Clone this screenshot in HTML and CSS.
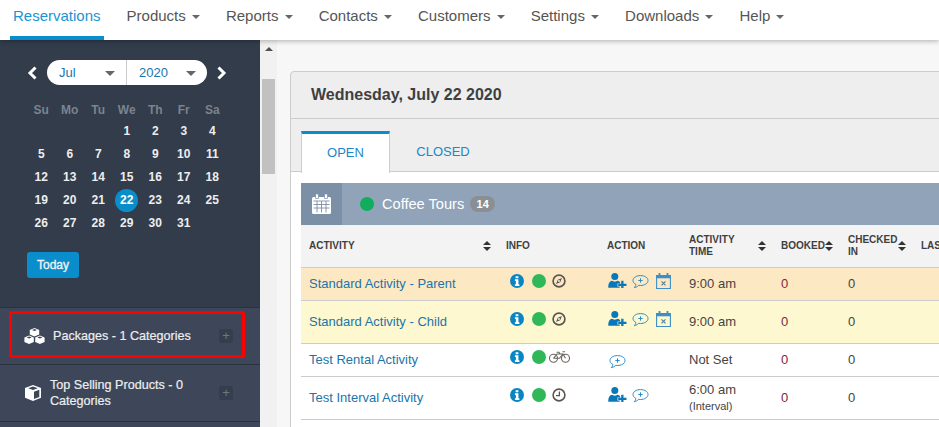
FILE: index.html
```html
<!DOCTYPE html>
<html lang="en">
<head>
<meta charset="utf-8">
<title>Reservations</title>
<link rel="stylesheet" href="styles.css">
</head>
<body>
<svg class="defs" width="0" height="0" aria-hidden="true">
  <symbol id="i-info" viewBox="0 0 14 14">
    <circle cx="7" cy="7" r="7" fill="#0a85c4"/>
    <path d="M5.600 2.200h2.800v2.100H5.600zM4.900 5.300h3.500v4.900h1v1.700H4.900v-1.700h1V7H4.900z" fill="#fff"/>
  </symbol>
  <symbol id="i-compass" viewBox="0 0 14 14">
    <circle cx="7" cy="7" r="5.900" fill="none" stroke="#5d5650" stroke-width="1.700"/>
    <path d="M10 4 8.200 8.200 4 10l1.800-4.200z" fill="#5d5650"/>
    <circle cx="7" cy="7" r=".9" fill="#fff"/>
  </symbol>
  <symbol id="i-clock" viewBox="0 0 14 14">
    <circle cx="7" cy="7" r="5.900" fill="none" stroke="#5d5650" stroke-width="1.600"/>
    <path d="M7.400 3.400v4.200H4" fill="none" stroke="#5d5650" stroke-width="1.300"/>
  </symbol>
  <symbol id="i-bike" viewBox="0 0 21 12">
    <g fill="none" stroke="#6b6560" stroke-width="1.100">
      <circle cx="4.500" cy="7.300" r="4"/>
      <circle cx="16.500" cy="7.300" r="4"/>
      <path d="M4.500 7.300 8 3h6l2.500 4.300M14 3l-3.500 4.300h-6M7.500 1.300H10l1 1.700M13.500.7H16"/>
    </g>
  </symbol>
  <symbol id="i-user" viewBox="0 0 19 15">
    <circle cx="6.800" cy="3.600" r="3.500" fill="#0a78b8"/>
    <path d="M.3 14.800c-.4-4.300 1.500-6.800 3.500-7 1.800 1.100 4.200 1.100 6 0 .9.100 1.700.6 2.300 1.400v1.300H9.500v3h2.200v1.300z" fill="#0a78b8"/>
    <path d="M13.200 7.800h2.300v3h3v2.300h-3v1.900h-2.300V13.100h-3v-2.300h3z" fill="#0a78b8"/>
  </symbol>
  <symbol id="i-chat" viewBox="0 0 17 14">
    <path d="M8.500.6C4.300.6 1 2.700 1 5.500c0 1.600 1.100 3 2.800 3.800 0 1.300-.6 2.400-1.500 3.400 1.800-.3 3.300-1.200 4.400-2.400.6.100 1.200.2 1.800.2 4.200 0 7.500-2.100 7.500-5S12.700.6 8.500.6z" fill="none" stroke="#2a8fc9" stroke-width="1"/>
    <path d="M8.500 3.300v4.400M6.300 5.500h4.400" stroke="#2a8fc9" stroke-width="1"/>
  </symbol>
  <symbol id="i-cal-x" viewBox="0 0 15 16">
    <path d="M.6 2.500h13.800v13H.6z" fill="none" stroke="#3d8fc6" stroke-width="1.100"/>
    <path d="M.6 2.500h13.800v2.800H.6z" fill="#3d8fc6"/>
    <path d="M3.500 0v3.500M11.500 0v3.500" stroke="#3d8fc6" stroke-width="1.800"/>
    <path d="m5.500 8.300 4 4M9.500 8.300l-4 4" stroke="#5a7f9c" stroke-width="1.200"/>
  </symbol>
</svg>

<header class="topbar">
  <nav class="nav">
    <a class="nav-item active">Reservations</a>
    <a class="nav-item">Products <i class="caret"></i></a>
    <a class="nav-item">Reports <i class="caret"></i></a>
    <a class="nav-item">Contacts <i class="caret"></i></a>
    <a class="nav-item">Customers <i class="caret"></i></a>
    <a class="nav-item">Settings <i class="caret"></i></a>
    <a class="nav-item">Downloads <i class="caret"></i></a>
    <a class="nav-item">Help <i class="caret"></i></a>
  </nav>
</header>

<div class="main">
  <aside class="sidebar">
    <div class="calendar">
      <div class="cal-head">
        <svg class="chev" viewBox="0 0 10 14"><path d="M8.500 1.500 3 7l5.500 5.500" fill="none" stroke="#fff" stroke-width="3"/></svg>
        <div class="pill">
          <div class="pill-part month">Jul<i class="pill-caret"></i></div>
          <div class="pill-part year">2020<i class="pill-caret"></i></div>
        </div>
        <svg class="chev" viewBox="0 0 10 14"><path d="M1.500 1.500 7 7l-5.500 5.500" fill="none" stroke="#fff" stroke-width="3"/></svg>
      </div>
      <div class="cal-grid dow">
        <span>Su</span><span>Mo</span><span>Tu</span><span>We</span><span>Th</span><span>Fr</span><span>Sa</span>
      </div>
      <div class="cal-grid days">
        <span></span><span></span><span></span><span>1</span><span>2</span><span>3</span><span>4</span>
        <span>5</span><span>6</span><span>7</span><span>8</span><span>9</span><span>10</span><span>11</span>
        <span>12</span><span>13</span><span>14</span><span>15</span><span>16</span><span>17</span><span>18</span>
        <span>19</span><span>20</span><span>21</span><span class="today"><b>22</b></span><span>23</span><span>24</span><span>25</span>
        <span>26</span><span>27</span><span>28</span><span>29</span><span>30</span><span>31</span><span></span>
      </div>
      <button class="today-btn">Today</button>
    </div>

    <div class="side-item highlighted">
      <svg class="side-icon cubes" viewBox="0 0 21 16">
        <path d="M10.500 0 15.200 2v4.400L10.500 8.400 5.800 6.400V2z" fill="#fff"/>
        <path d="M5.100 7.400 9.800 9.400v4.500L5.100 16 .4 13.900V9.400z" fill="#fff"/>
        <path d="M15.900 7.400l4.700 2v4.500L15.900 16l-4.700-2.100V9.400z" fill="#fff"/>
        <path d="M8 2.100l2.500-1 2.500 1-2.500 1zM2.600 9.500l2.500-1 2.500 1-2.500 1zM13.400 9.500l2.500-1 2.500 1-2.500 1z" fill="#3e4759"/>
      </svg>
      <span class="side-label single">Packages - 1 Categories</span>
      <span class="side-plus">+</span>
    </div>
    <div class="side-item">
      <svg class="side-icon cube" viewBox="0 0 16 16">
        <path d="M8 0 16 3v9.800L8 16 0 12.800V3z" fill="#fff"/>
        <path d="M3.200 3.200 8 1.500l4.800 1.700L8 5zM9 6.700l5.300-2v7.300L9 14.100z" fill="#3e4759"/>
      </svg>
      <span class="side-label">Top Selling Products - 0 Categories</span>
      <span class="side-plus">+</span>
    </div>
    <div class="side-item"></div>
  </aside>

  <div class="scrollbar">
    <i class="scroll-up"></i>
    <div class="scroll-thumb"></div>
  </div>

  <section class="content">
    <div class="panel">
      <h1 class="panel-title">Wednesday, July 22 2020</h1>
      <div class="tabs">
        <a class="tab active">OPEN</a>
        <a class="tab">CLOSED</a>
      </div>
      <div class="panel-body">
        <div class="group-bar">
          <div class="group-icon">
            <svg viewBox="0 0 19 20" width="19" height="20">
              <path d="M1.500 3h16A1.500 1.500 0 0 1 19 4.500v14a1.500 1.500 0 0 1-1.500 1.500h-16A1.500 1.500 0 0 1 0 18.500v-14A1.500 1.500 0 0 1 1.500 3z" fill="#fff"/>
              <path d="M3.500 0h3v4.500h-3zM12.500 0h3v4.500h-3z" fill="#fff" stroke="#7b8fa7" stroke-width=".7"/>
              <path d="M1.500 7h16M1.500 10.500h16M1.500 14h16M5 7v11.500M9.500 7v11.500M14 7v11.500" stroke="#7b8fa7" stroke-width=".9"/>
            </svg>
          </div>
          <i class="group-dot"></i>
          <span class="group-name">Coffee Tours</span>
          <span class="group-count">14</span>
        </div>
        <table class="activities">
          <colgroup>
            <col class="c-activity"><col class="c-info"><col class="c-action"><col class="c-time"><col class="c-booked"><col class="c-checked"><col class="c-last">
          </colgroup>
          <thead>
            <tr>
              <th><div class="th-inner">ACTIVITY<i class="sort"></i></div></th>
              <th>INFO</th>
              <th>ACTION</th>
              <th><div class="th-inner">ACTIVITY<br>TIME<i class="sort"></i></div></th>
              <th><div class="th-inner">BOOKED<i class="sort"></i></div></th>
              <th><div class="th-inner">CHECKED<br>IN<i class="sort"></i></div></th>
              <th>LAST</th>
            </tr>
          </thead>
          <tbody>
            <tr class="row-orange r1">
              <td><a>Standard Activity - Parent</a></td>
              <td><div class="icons info-icons"><svg class="ic"><use href="#i-info"/></svg><i class="dot"></i><svg class="ic"><use href="#i-compass"/></svg></div></td>
              <td><div class="icons act-icons"><svg class="ic-user"><use href="#i-user"/></svg><svg class="ic-chat"><use href="#i-chat"/></svg><svg class="ic-cal"><use href="#i-cal-x"/></svg></div></td>
              <td>9:00 am</td><td class="booked">0</td><td>0</td><td></td>
            </tr>
            <tr class="row-yellow r2">
              <td><a>Standard Activity - Child</a></td>
              <td><div class="icons info-icons"><svg class="ic"><use href="#i-info"/></svg><i class="dot"></i><svg class="ic"><use href="#i-compass"/></svg></div></td>
              <td><div class="icons act-icons"><svg class="ic-user"><use href="#i-user"/></svg><svg class="ic-chat"><use href="#i-chat"/></svg><svg class="ic-cal"><use href="#i-cal-x"/></svg></div></td>
              <td>9:00 am</td><td class="booked">0</td><td>0</td><td></td>
            </tr>
            <tr class="r3">
              <td><a>Test Rental Activity</a></td>
              <td><div class="icons info-icons"><svg class="ic"><use href="#i-info"/></svg><i class="dot"></i><svg class="ic-bike"><use href="#i-bike"/></svg></div></td>
              <td><div class="icons act-icons"><svg class="ic-chat"><use href="#i-chat"/></svg></div></td>
              <td>Not Set</td><td class="booked">0</td><td>0</td><td></td>
            </tr>
            <tr class="r4">
              <td><a>Test Interval Activity</a></td>
              <td><div class="icons info-icons"><svg class="ic"><use href="#i-info"/></svg><i class="dot"></i><svg class="ic"><use href="#i-clock"/></svg></div></td>
              <td><div class="icons act-icons"><svg class="ic-user"><use href="#i-user"/></svg><svg class="ic-chat"><use href="#i-chat"/></svg></div></td>
              <td>6:00 am<small>(Interval)</small></td><td class="booked">0</td><td>0</td><td></td>
            </tr>
          </tbody>
        </table>
      </div>
    </div>
  </section>
</div>
</body>
</html>
```

FILE: styles.css
```css
* { box-sizing: border-box; }
html, body { margin: 0; height: 100%; overflow: hidden; }
body { width: 939px; height: 427px; font-family: "Liberation Sans", Arial, sans-serif; background: #f7f7f7; color: #444; display: flex; flex-direction: column; }
.defs { position: absolute; }

.topbar { height: 40px; background: #fff; box-shadow: 0 1px 5px rgba(0,0,0,.3); position: relative; z-index: 2; flex: none; }
.nav { display: flex; gap: 20px; padding-left: 10px; height: 40px; }
.nav-item { padding: 0 3px; height: 40px; line-height: 32px; font-size: 15px; color: #555; white-space: nowrap; }
.nav-item.active { color: #1a94d2; border-bottom: 4px solid #0a8ecb; }
.caret { display: inline-block; width: 0; height: 0; margin-left: 2px; vertical-align: 2px; border-left: 4px solid transparent; border-right: 4px solid transparent; border-top: 4px solid #666; }

.main { flex: 1; display: flex; min-height: 0; }

.sidebar { width: 260px; flex: none; background: #323c4b; overflow: hidden; }
.calendar { height: 267px; padding-top: 20px; }
.cal-head { display: flex; align-items: center; height: 25px; padding-left: 27px; }
.chev { width: 10px; height: 14px; }
.pill { width: 160px; height: 25px; margin: 0 10px; background: #fff; border-radius: 13px; display: flex; font-size: 13px; color: #1a75ab; }
.pill-part { position: relative; line-height: 25px; }
.month { width: 80px; padding-left: 12px; border-right: 1px solid #ccc; }
.year { flex: 1; padding-left: 12px; }
.pill-caret { position: absolute; top: 11px; width: 0; height: 0; border-left: 5px solid transparent; border-right: 5px solid transparent; border-top: 5px solid #666; }
.month .pill-caret { left: 58px; }
.year .pill-caret { left: 59px; }

.cal-grid { display: grid; grid-template-columns: repeat(7, 28.5px); padding-left: 27px; font-weight: 700; font-size: 12px; text-align: center; }
.dow { margin-top: 18px; height: 14px; line-height: 14px; color: #7b838f; }
.days { margin-top: 2.600px; grid-auto-rows: 23.100px; line-height: 23px; color: #eee; }
.today b { display: block; width: 23px; height: 23px; margin: 0 auto; border-radius: 50%; background: #0a8ecb; color: #fff; }
.today-btn { display: block; margin: 17.400px 0 0 27px; width: 52px; height: 26px; padding: 0; border: 0; border-radius: 3px; background: #0a8ecb; color: #f2f2f2; font-family: "Liberation Sans", Arial, sans-serif; font-size: 12px; -webkit-text-stroke: .35px #f2f2f2; }

.side-item { position: relative; height: 57px; background: #3e4759; border-top: 1px solid #2a3240; display: flex; align-items: center; color: #eceef0; font-size: 12.600px; line-height: 16px; -webkit-text-stroke: .2px #eceef0; }
.highlighted::after { content: ""; box-sizing: border-box; position: absolute; left: 9px; top: 3px; width: 236px; height: 47px; border: 3px solid #f00; border-radius: 2px; }
.side-icon { flex: none; }
.cubes { width: 21px; height: 16px; margin-left: 24px; }
.cube { width: 16px; height: 16px; margin-left: 25px; }
.side-label { flex: none; width: 150px; margin-left: 8px; }
.side-label.single { white-space: nowrap; }
.cube + .side-label { margin-left: 9px; }
.side-plus { position: absolute; left: 219px; top: 21px; width: 14px; height: 14px; background: #353e4e; border-radius: 2px; color: #6f7785; font-size: 13px; line-height: 14px; text-align: center; -webkit-text-stroke: 0; }

.scrollbar { width: 17px; flex: none; background: #f1f1f1; display: flex; flex-direction: column; align-items: center; }
.scroll-up { margin-top: 7px; width: 0; height: 0; border-left: 4px solid transparent; border-right: 4px solid transparent; border-bottom: 4px solid #505050; flex: none; }
.scroll-thumb { margin-top: 28px; width: 13px; height: 95px; background: #c1c1c1; }

.content { flex: 1; min-width: 0; padding: 31px 0 0 13px; overflow: hidden; }
.panel { width: 700px; height: 400px; background: #eee; border: 1px solid #ccc; border-radius: 4px 0 0 0; }
.panel-title { margin: 0; height: 47px; padding-left: 20px; line-height: 45px; font-size: 16px; font-weight: 700; color: #3f3f3f; border-bottom: 1px solid #ccc; }
.tabs { display: flex; height: 53px; padding: 12px 0 0 10px; background: #eee; }
.tab { height: 41px; font-size: 13px; line-height: 43px; text-align: center; color: #1a88c9; }
.tab.active { position: relative; z-index: 1; width: 89px; height: 42px; background: #fff; border: 1px solid #ccc; border-top: 3px solid #0a8ecb; border-bottom: 0; line-height: 37px; }
.tab:not(.active) { width: 106px; line-height: 42px; }
.panel-body { position: relative; background: #fff; padding: 11px 0 0 10px; height: 300px; border-top: 1px solid #ccc; margin-top: -1px; }

.group-bar { display: flex; align-items: center; height: 42px; background: #90a3b9; }
.group-icon { width: 41px; height: 42px; background: #7b8fa7; display: flex; align-items: center; justify-content: center; }
.group-dot { width: 14px; height: 14px; margin-left: 18px; border-radius: 50%; background: #10ae5c; }
.group-name { margin-left: 8px; font-size: 14.600px; color: #fff; }
.group-count { margin-left: 6px; width: 25px; height: 16px; border-radius: 8px; background: #8b8f94; color: #fff; font-size: 11px; font-weight: 700; line-height: 16px; text-align: center; }

.activities { table-layout: fixed; width: 690px; border-collapse: collapse; font-size: 13px; color: #444; }
.c-activity { width: 197px; } .c-info { width: 101px; } .c-action { width: 82px; } .c-time { width: 92px; } .c-booked { width: 67px; } .c-checked { width: 73px; } .c-last { width: 78px; }
.activities th { height: 42px; padding: 0 8px; background: #f3f3f3; border-bottom: 1px solid #ccc; text-align: left; font-size: 10px; font-weight: 700; line-height: 12px; color: #3f3f3f; white-space: nowrap; overflow: hidden; }
.th-inner { position: relative; }
.sort { position: absolute; right: -1px; top: 50%; width: 8px; height: 10px; margin-top: -5px; }
.sort::before, .sort::after { content: ""; position: absolute; left: 0; width: 0; height: 0; border-left: 4px solid transparent; border-right: 4px solid transparent; }
.sort::before { top: 0; border-bottom: 4.500px solid #333; }
.sort::after { bottom: 0; border-top: 4.500px solid #333; }
.activities td { padding: 0 8px 1px; vertical-align: middle; border-bottom: 1px solid #ccc; font-size: 13px; }
.activities td a { color: #1a75ab; white-space: nowrap; }
.activities td small { display: block; margin-top: 3px; font-size: 11px; line-height: 13px; }
.activities td.booked { color: #7a2a3a; }
.row-orange td { background: #fde8c4; }
.row-yellow td { background: #fdf8cf; }
.r1 td { height: 33px; }
.r2 td { height: 43px; }
.r3 td { height: 33px; }
.r4 td { height: 43px; line-height: 15px; }

.icons { display: flex; align-items: center; height: 17px; margin-top: -5px; }
.ic { width: 14px; height: 14px; flex: none; }
.dot { width: 14px; height: 14px; margin: 0 6px 0 8px; flex: none; border-radius: 50%; background: #30b858; }
.ic-bike { width: 21px; height: 12px; margin-left: -3px; flex: none; }
.info-icons { margin-left: 4px; }
.act-icons { margin-left: 1px; gap: 5px; }
.ic-user { width: 19px; height: 15px; flex: none; }
.ic-chat { width: 17px; height: 14px; margin-top: 3px; flex: none; }
.ic-cal { width: 15px; height: 16px; margin-left: 2px; flex: none; }
.r3 .act-icons { margin: 2px 0 0 2px; }
```
